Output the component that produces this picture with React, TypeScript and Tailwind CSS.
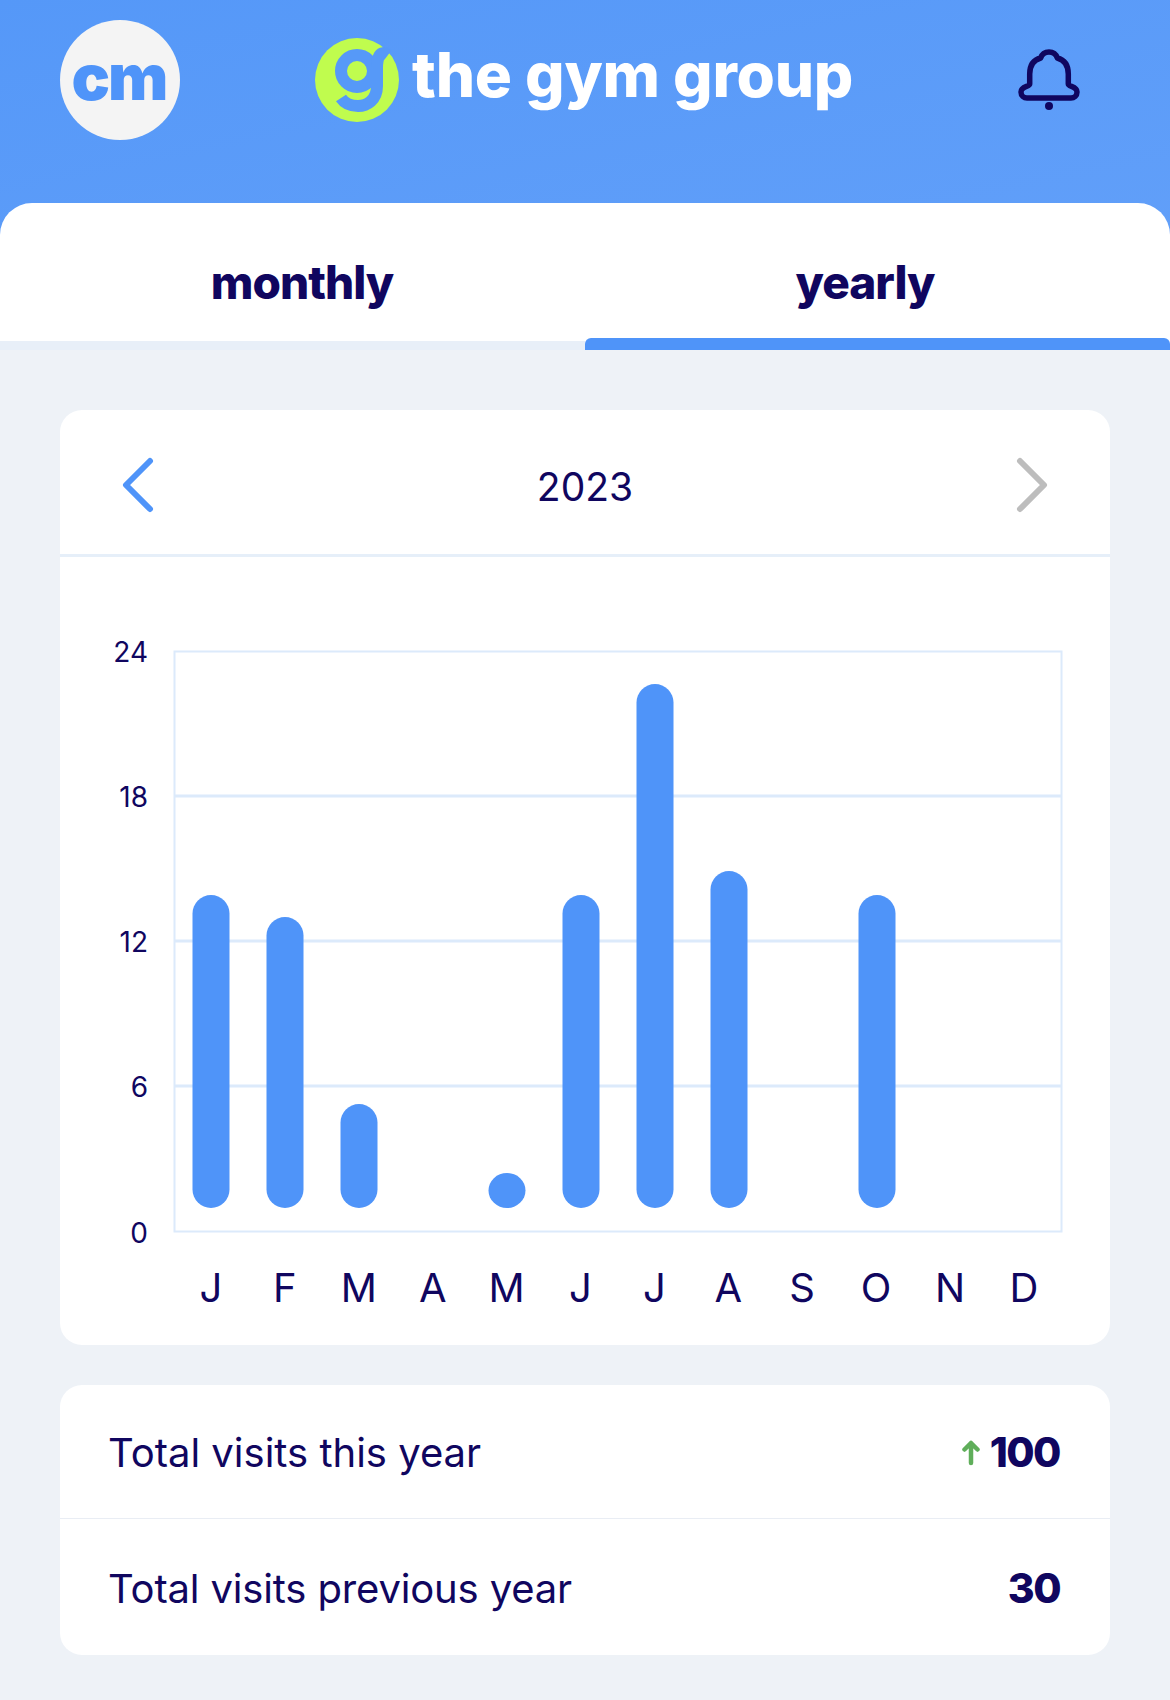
import React from 'react';

const NAVY = '#10065f';
const BLUE = '#4f94f9';

const months = ['J', 'F', 'M', 'A', 'M', 'J', 'J', 'A', 'S', 'O', 'N', 'D'];
// top of each bar in chart coordinates, null when there were no visits
const barTops: (number | null)[] = [338, 360, 547, null, 616, 338, 127, 314, null, 338, null, null];

function Logo() {
  return (
    <svg width="84" height="84" viewBox="0 0 84 84" className="shrink-0">
      <circle cx="42" cy="42" r="42" fill="#c0fc4e" />
      <circle cx="42" cy="33" r="16" fill="none" stroke="#5699f8" strokeWidth="12" />
      <path
        d="M73 17C65 11 62 20 62 30L62 48C62 62 52 68 43 68C35 68 30 66 26 60"
        fill="none"
        stroke="#5699f8"
        strokeWidth="12"
      />
    </svg>
  );
}

function Bell() {
  return (
    <svg width="62" height="64" viewBox="0 0 62 64" fill="none" stroke={NAVY} strokeWidth="5.5" strokeLinejoin="round">
      <path d="M31 4C27 4 24 6 22.700 10C15 12 11.700 18 11.700 26L11.700 36C11.700 39 3 38 3 44C3 48 6 50 9 50L53 50C56 50 59 48 59 44C59 38 50.300 39 50.300 36L50.300 26C50.300 18 47 12 39.300 10C38 6 35 4 31 4Z" />
      <circle cx="31" cy="58" r="4" fill={NAVY} stroke="none" />
    </svg>
  );
}

function Chart() {
  return (
    <svg width="1050" height="788" viewBox="0 0 1050 788" className="block" fontFamily="Inter, sans-serif">
      <rect x="114.500" y="94.500" width="887" height="580" fill="none" stroke="#dceafb" strokeWidth="2" />
      {[145, 290, 435].map((d) => (
        <line key={d} x1="114" x2="1002" y1={94 + d} y2={94 + d} stroke="#dceafb" strokeWidth="3" />
      ))}
      {['24', '18', '12', '6', '0'].map((t, i) => (
        <text key={t} x="88" y={104.500 + i * 145.300} textAnchor="end" fontSize="28" fill={NAVY}>
          {t}
        </text>
      ))}
      {barTops.map((top, i) =>
        top === null ? null : (
          <rect key={i} x={132.500 + i * 74} y={top} width="37" height={651 - top} rx="18.500" fill={BLUE} />
        ),
      )}
      {months.map((m, i) => (
        <text key={i} x={151 + i * 73.900} y="745" textAnchor="middle" fontSize="40" fill={NAVY}>
          {m}
        </text>
      ))}
    </svg>
  );
}

export default function App() {
  return (
    <div className="min-h-[1700px] bg-[#eef2f7] font-['Inter',sans-serif] text-[#10065f]">
      <header className="h-[240px] bg-gradient-to-br from-[#5598f8] to-[#619ff9] px-[60px] pt-[20px]">
        <div className="flex items-start">
          <div className="flex h-[120px] w-[120px] items-center justify-center rounded-full bg-[#f4f4f4] pr-[2px] pb-[6px] text-[64px] leading-none font-black tracking-[-2px] text-[#4f94f9]">
            cm
          </div>
          <div className="mt-[18px] ml-[135px] flex items-center gap-[13px]">
            <Logo />
            <span className="-mt-[10px] text-[62px] leading-none font-extrabold tracking-[-0.250px] text-white">the gym group</span>
          </div>
          <div className="mt-[28px] mr-[30px] ml-auto">
            <Bell />
          </div>
        </div>
      </header>

      <div className="-mt-[37px] flex h-[147px] rounded-t-[32px] bg-white">
        <div className="flex flex-1 flex-col">
          <div className="flex flex-1 items-center justify-center pt-[20px] pl-[19px] text-[46px] font-extrabold tracking-[-1px]">monthly</div>
          <div className="h-[9px] bg-[#e8eff8]" />
        </div>
        <div className="flex flex-1 flex-col">
          <div className="flex flex-1 items-center justify-center pt-[24px] pr-[25px] text-[46px] font-extrabold tracking-[-1px]">yearly</div>
          <div className="h-[12px] rounded-t-[6px] bg-[#4f94f9]" />
        </div>
      </div>

      <section className="mx-[60px] mt-[60px] rounded-[22px] bg-white">
        <div className="flex h-[147px] items-center justify-between border-b-[3px] border-[#e6eff9] px-[62px] pt-[6px]">
          <svg width="32" height="56" viewBox="0 0 32 56" fill="none" stroke="#4f94f9" strokeWidth="6" strokeLinecap="round" strokeLinejoin="round">
            <path d="M28 4L4 28L28 52" />
          </svg>
          <span className="mt-[2px] text-[39px] leading-none">2023</span>
          <svg width="32" height="56" viewBox="0 0 32 56" fill="none" stroke="#bdbdbd" strokeWidth="6" strokeLinecap="round" strokeLinejoin="round">
            <path d="M4 4L28 28L4 52" />
          </svg>
        </div>
        <Chart />
      </section>

      <section className="mx-[60px] mt-[40px] rounded-[22px] bg-white">
        <div className="flex h-[134px] items-center justify-between border-b border-[#e9edf4] pt-[3px] pr-[50px] pl-[48px]">
          <span className="text-[40px]">Total visits this year</span>
          <span className="flex items-center gap-[10px] text-[41px] font-extrabold tracking-[-1.500px]">
            <svg width="18" height="26" viewBox="0 0 18 26" fill="none" stroke="#5fae5a" strokeWidth="4.500" strokeLinecap="round" strokeLinejoin="round">
              <path d="M9 23L9 3M2.500 9.500L9 3L15.500 9.500" />
            </svg>
            100
          </span>
        </div>
        <div className="flex h-[136px] items-center justify-between pt-[3px] pr-[50px] pl-[48px]">
          <span className="text-[40px] tracking-[-0.150px]">Total visits previous year</span>
          <span className="text-[41px] font-extrabold tracking-[-1.500px]">30</span>
        </div>
      </section>
    </div>
  );
}
